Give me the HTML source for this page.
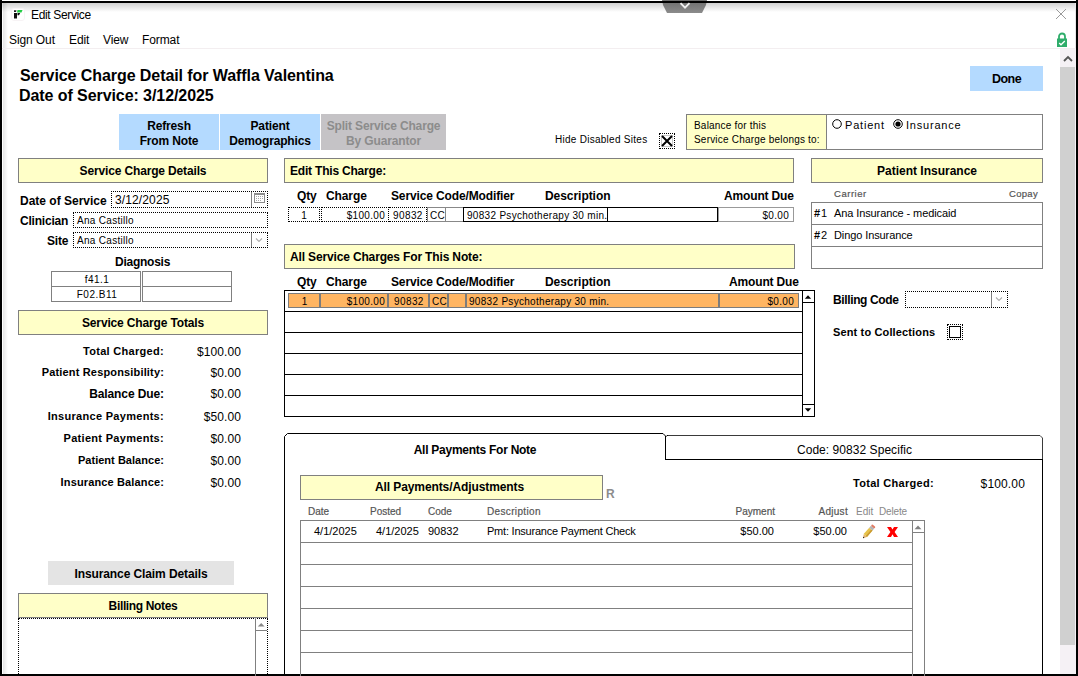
<!DOCTYPE html>
<html><head><meta charset="utf-8">
<style>
*{margin:0;padding:0;box-sizing:border-box}
html,body{width:1078px;height:676px;overflow:hidden;background:#fff;font-family:"Liberation Sans",sans-serif;color:#000}
.a{position:absolute}
.t{position:absolute;white-space:nowrap;line-height:1}
.b{font-weight:bold}
.yel{position:absolute;background:#ffffc8;border:1px solid #808080}
.dot{position:absolute;border:1px dotted #000}
.ctr{text-align:center}
.r{text-align:right}
.hl{position:absolute;height:1px}
.vl{position:absolute;width:1px}
</style></head><body>
<!-- window frame -->
<div class="a" style="left:2px;top:3px;width:1074px;height:9px;background:linear-gradient(rgba(0,0,0,0.18),rgba(0,0,0,0))"></div>
<div class="a" style="left:3px;top:3px;width:5px;height:671px;background:linear-gradient(90deg,rgba(0,0,0,0.1),rgba(0,0,0,0))"></div>
<div class="vl" style="left:1075px;top:3px;height:671px;background:#e8e6e8"></div>
<div class="a" style="left:0;top:1px;width:1078px;height:2px;background:#000"></div>
<div class="a" style="left:0;top:0;width:2px;height:676px;background:#000"></div>
<div class="a" style="left:1076px;top:0;width:2px;height:676px;background:#000"></div>
<div class="a" style="left:0;top:674px;width:1078px;height:2px;background:#000"></div>

<!-- top tab chevron -->
<svg class="a" style="left:660px;top:0" width="50" height="14" viewBox="0 0 50 14">
<defs><linearGradient id="tg" x1="0" y1="0" x2="0" y2="1"><stop offset="0" stop-color="#6c6c6c"/><stop offset="1" stop-color="#8c8c8c"/></linearGradient></defs>
<path d="M2 0 H47 L46 5 L42 13 H7 L3 5 Z" fill="url(#tg)"/>
<rect x="0" y="1" width="50" height="2" fill="#000"/>
<path d="M20.5 3.2 L25 7.7 L29.5 3.2" stroke="#f0f0f0" stroke-width="1.9" fill="none"/>
</svg>

<!-- title -->
<svg class="a" style="left:11px;top:8px" width="14" height="13" viewBox="0 0 14 13">
<rect x="0.5" y="0.5" width="13" height="12" rx="2.5" fill="#fff" stroke="#f7f3f5" stroke-width="1"/>
<rect x="3" y="5" width="3" height="5.5" fill="#111"/>
<path d="M3 2.2 H5.5 L5 4 H3Z" fill="#222"/>
<path d="M6.5 2 H11.5 L10.5 4.5 H6 Z" fill="#22cc44"/>
<path d="M6.5 5 H9.2 L8 7.2 H6.5Z" fill="#111"/>
</svg>
<div class="t" style="left:31px;top:9px;font-size:12px;letter-spacing:-0.35px">Edit Service</div>
<svg class="a" style="left:1055px;top:8px" width="12" height="12" viewBox="0 0 12 12"><path d="M1 1L11 11M11 1L1 11" stroke="#9a9a9a" stroke-width="1"/></svg>

<!-- menu -->
<div class="t" style="left:9px;top:34px;font-size:12px;letter-spacing:-0.1px">Sign Out</div>
<div class="t" style="left:69px;top:34px;font-size:12px;letter-spacing:-0.1px">Edit</div>
<div class="t" style="left:103px;top:34px;font-size:12px;letter-spacing:-0.1px">View</div>
<div class="t" style="left:142px;top:34px;font-size:12px;letter-spacing:-0.1px">Format</div>
<div class="a" style="left:2px;top:48px;width:1074px;height:1px;background:#f3eef0"></div>
<!-- lock -->
<svg class="a" style="left:1056px;top:32px" width="12" height="16" viewBox="0 0 12 16">
<path d="M3 7V4.5a3 3 0 0 1 6 0V7" stroke="#2fad6b" stroke-width="1.8" fill="none"/>
<rect x="1" y="6.5" width="10" height="8.5" fill="#2fad6b"/>
<path d="M3.2 11 L5 12.8 L8.8 9" stroke="#fff" stroke-width="1.3" fill="none"/>
</svg>

<!-- right window scrollbar -->
<div class="a" style="left:1060px;top:49px;width:16px;height:625px;background:#f5f1f5"></div>
<div class="a" style="left:1060px;top:67px;width:15px;height:578px;background:#d0d0d0"></div>
<svg class="a" style="left:1062px;top:54px" width="12" height="10" viewBox="0 0 12 10"><path d="M2 7 L6 3 L10 7" stroke="#555" stroke-width="1.8" fill="none"/></svg>

<!-- heading -->
<div class="t b" style="left:20px;top:68px;font-size:16px;letter-spacing:-0.075px">Service Charge Detail for Waffla Valentina</div>
<div class="t b" style="left:19px;top:88px;font-size:16px;letter-spacing:-0.075px">Date of Service: 3/12/2025</div>

<!-- buttons -->
<div class="a b ctr" style="left:119px;top:114px;width:100px;height:36px;background:#b4daff;font-size:12px;line-height:15px;padding-top:5px;letter-spacing:-0.15px">Refresh<br>From Note</div>
<div class="a b ctr" style="left:220px;top:114px;width:100px;height:36px;background:#b4daff;font-size:12px;line-height:15px;padding-top:5px;letter-spacing:-0.15px">Patient<br>Demographics</div>
<div class="a b ctr" style="left:321px;top:114px;width:125px;height:36px;background:#c5c3c6;color:#8c8c8c;font-size:12px;line-height:15px;padding-top:5px;letter-spacing:-0.15px">Split Service Charge<br>By Guarantor</div>

<div class="t" style="left:555px;top:135px;font-size:10px;letter-spacing:0.27px">Hide Disabled Sites</div>
<div class="dot" style="left:659px;top:133px;width:16px;height:16px"></div>
<svg class="a" style="left:660px;top:134px" width="14" height="14" viewBox="0 0 14 14"><rect x="1.5" y="1.5" width="11" height="11" fill="none" stroke="#c8c8c8"/><path d="M2 2L12 12M12 2L2 12" stroke="#000" stroke-width="2"/></svg>

<!-- balance box -->
<div class="a" style="left:686px;top:114px;width:357px;height:36px;border:1px solid #808080;background:#fff"></div>
<div class="a" style="left:687px;top:115px;width:140px;height:34px;background:#ffffc8;border-right:1px solid #808080"></div>
<div class="t" style="left:694px;top:121px;font-size:10px;letter-spacing:0.2px">Balance for this</div>
<div class="t" style="left:694px;top:135px;font-size:10px;letter-spacing:0.2px">Service Charge belongs to:</div>
<svg class="a" style="left:832px;top:119px" width="10" height="10" viewBox="0 0 10 10"><circle cx="5" cy="5" r="4.3" fill="#fff" stroke="#000" stroke-width="1"/></svg>
<div class="t" style="left:845px;top:120px;font-size:11px;letter-spacing:0.8px">Patient</div>
<svg class="a" style="left:893px;top:119px" width="10" height="10" viewBox="0 0 10 10"><circle cx="5" cy="5" r="4.3" fill="#fff" stroke="#000" stroke-width="1"/><circle cx="5" cy="5" r="2.6" fill="#000"/></svg>
<div class="t" style="left:906px;top:120px;font-size:11px;letter-spacing:0.79px">Insurance</div>

<!-- Done -->
<div class="a b ctr" style="left:970px;top:66px;width:73px;height:25px;background:#b4daff;font-size:12.5px;line-height:25px;padding-top:1px;letter-spacing:-0.5px">Done</div>

<!-- LEFT PANEL -->
<div class="yel b ctr" style="left:18px;top:158px;width:250px;height:25px;font-size:12px;line-height:23px;padding-top:1px;letter-spacing:-0.15px">Service Charge Details</div>
<div class="t b" style="left:20px;top:195px;font-size:12px">Date of Service</div>
<div class="dot" style="left:111px;top:191px;width:157px;height:17px"></div>
<div class="t" style="left:115px;top:194px;font-size:12px;letter-spacing:0.12px">3/12/2025</div>
<div class="vl" style="left:251px;top:192px;height:15px;background:#808080"></div>
<svg class="a" style="left:253px;top:192px" width="13" height="12" viewBox="0 0 13 12"><rect x="1.5" y="1.5" width="10" height="9" fill="#fff" stroke="#8c8c8c"/><rect x="1" y="1" width="11" height="2" fill="#8c8c8c"/><path d="M3 4.5h1M5 4.5h1M7 4.5h1M9 4.5h1M3 6.5h1M5 6.5h1M7 6.5h1M9 6.5h1M3 8.5h1M5 8.5h1M7 8.5h1" stroke="#a8a8a8"/></svg>
<div class="t b" style="left:20px;top:215px;font-size:12px;letter-spacing:-0.2px">Clinician</div>
<div class="dot" style="left:73px;top:212px;width:195px;height:16px"></div>
<div class="t" style="left:77px;top:216px;font-size:10px;letter-spacing:0.3px">Ana Castillo</div>
<div class="t b" style="left:47px;top:235px;font-size:12px;letter-spacing:-0.2px">Site</div>
<div class="dot" style="left:73px;top:232px;width:195px;height:16px"></div>
<div class="t" style="left:77px;top:236px;font-size:10px;letter-spacing:0.3px">Ana Castillo</div>
<div class="vl" style="left:251px;top:233px;height:14px;background:#808080"></div>
<svg class="a" style="left:254px;top:236px" width="10" height="8" viewBox="0 0 10 8"><path d="M2 2.5L5 5.5L8 2.5" stroke="#b0b0b0" stroke-width="1.2" fill="none"/></svg>

<div class="t b" style="left:115px;top:256px;font-size:12px;letter-spacing:-0.25px">Diagnosis</div>
<div class="a" style="left:51px;top:271px;width:90px;height:16px;border:1px solid #808080"></div>
<div class="a" style="left:142px;top:271px;width:90px;height:16px;border:1px solid #808080"></div>
<div class="a" style="left:51px;top:286px;width:90px;height:16px;border:1px solid #808080"></div>
<div class="a" style="left:142px;top:286px;width:90px;height:16px;border:1px solid #808080"></div>
<div class="t ctr" style="left:52px;top:275px;width:90px;font-size:10px;letter-spacing:0.5px">f41.1</div>
<div class="t ctr" style="left:52px;top:290px;width:90px;font-size:10px;letter-spacing:0.5px">F02.B11</div>

<div class="yel b ctr" style="left:18px;top:310px;width:250px;height:25px;font-size:12px;line-height:23px;padding-top:1px;letter-spacing:-0.15px">Service Charge Totals</div>
<div class="t b r" style="left:0;top:346px;width:164px;font-size:11px;letter-spacing:0.3px">Total Charged:</div>
<div class="t r" style="left:150px;top:346px;width:91px;font-size:12px;letter-spacing:0.1px">$100.00</div>
<div class="t b r" style="left:0;top:367px;width:164px;font-size:11px;letter-spacing:0.16px">Patient Responsibility:</div>
<div class="t r" style="left:150px;top:367px;width:91px;font-size:12px;letter-spacing:0.1px">$0.00</div>
<div class="t b r" style="left:0;top:388px;width:164px;font-size:12px;letter-spacing:-0.1px">Balance Due:</div>
<div class="t r" style="left:150px;top:388px;width:91px;font-size:12px;letter-spacing:0.1px">$0.00</div>
<div class="t b r" style="left:0;top:411px;width:164px;font-size:11px;letter-spacing:0.3px">Insurance Payments:</div>
<div class="t r" style="left:150px;top:411px;width:91px;font-size:12px;letter-spacing:0.1px">$50.00</div>
<div class="t b r" style="left:0;top:433px;width:164px;font-size:11px;letter-spacing:0.3px">Patient Payments:</div>
<div class="t r" style="left:150px;top:433px;width:91px;font-size:12px;letter-spacing:0.1px">$0.00</div>
<div class="t b r" style="left:0;top:455px;width:164px;font-size:11px;letter-spacing:0.03px">Patient Balance:</div>
<div class="t r" style="left:150px;top:455px;width:91px;font-size:12px;letter-spacing:0.1px">$0.00</div>
<div class="t b r" style="left:0;top:477px;width:164px;font-size:11px;letter-spacing:0.14px">Insurance Balance:</div>
<div class="t r" style="left:150px;top:477px;width:91px;font-size:12px;letter-spacing:0.1px">$0.00</div>

<div class="a b ctr" style="left:48px;top:561px;width:186px;height:24px;background:#e4e4e4;font-size:12px;line-height:24px;padding-top:1px;letter-spacing:-0.1px">Insurance Claim Details</div>
<div class="yel b ctr" style="left:18px;top:593px;width:250px;height:25px;font-size:12px;line-height:23px;padding-top:1px;letter-spacing:-0.35px">Billing Notes</div>
<div class="dot" style="left:18px;top:618px;width:250px;height:60px"></div>
<div class="vl" style="left:255px;top:618px;height:58px;background:#808080"></div>
<div class="hl" style="left:256px;top:630px;width:11px;background:#808080"></div>
<svg class="a" style="left:256px;top:621px" width="11" height="7" viewBox="0 0 11 7"><path d="M1.8 5.5L5.2 2L8.6 5.5Z" fill="#888"/></svg>

<!-- MIDDLE PANEL -->
<div class="yel b" style="left:284px;top:158px;width:510px;height:25px;font-size:12px;line-height:23px;padding-left:5px;padding-top:1px;letter-spacing:-0.2px">Edit This Charge:</div>
<div class="t b" style="left:297px;top:190px;font-size:12px;letter-spacing:-0.2px">Qty</div>
<div class="t b" style="left:326px;top:190px;font-size:12px;letter-spacing:-0.1px">Charge</div>
<div class="t b" style="left:391px;top:190px;font-size:12px;letter-spacing:-0.13px">Service Code/Modifier</div>
<div class="t b" style="left:545px;top:190px;font-size:12px;letter-spacing:-0.05px">Description</div>
<div class="t b" style="left:724px;top:190px;font-size:12px;letter-spacing:-0.15px">Amount Due</div>

<div class="dot" style="left:288px;top:207px;width:32px;height:15px"></div>
<div class="dot" style="left:321px;top:207px;width:68px;height:15px"></div>
<div class="a" style="left:389px;top:207px;width:38px;height:15px;border:1px dotted #000;border-left:none"></div>
<div class="a" style="left:427px;top:207px;width:19px;height:15px;border:1px solid #888"></div>
<div class="a" style="left:445px;top:207px;width:19px;height:15px;border:1px solid #888"></div>
<div class="a" style="left:463px;top:207px;width:255px;height:15px;border:1px solid #000"></div>
<div class="vl" style="left:607px;top:208px;height:13px;background:#000"></div>
<div class="a" style="left:718px;top:207px;width:76px;height:15px;border:1px solid #999"></div>
<div class="t ctr" style="left:288px;top:211px;width:32px;font-size:10px">1</div>
<div class="t r" style="left:321px;top:211px;width:64px;font-size:10px;letter-spacing:0.3px">$100.00</div>
<div class="t" style="left:393px;top:211px;font-size:10px;letter-spacing:0.4px">90832</div>
<div class="t" style="left:430px;top:211px;font-size:10px;letter-spacing:0.2px">CC</div>
<div class="t" style="left:467px;top:211px;font-size:10px;letter-spacing:0.3px">90832 Psychotherapy 30 min.</div>
<div class="t r" style="left:718px;top:211px;width:71px;font-size:10px;letter-spacing:0.3px">$0.00</div>

<div class="yel b" style="left:284px;top:244px;width:511px;height:25px;font-size:12px;line-height:23px;padding-left:5px;padding-top:1px;letter-spacing:-0.15px">All Service Charges For This Note:</div>
<div class="t b" style="left:297px;top:276px;font-size:12px;letter-spacing:-0.2px">Qty</div>
<div class="t b" style="left:326px;top:276px;font-size:12px;letter-spacing:-0.1px">Charge</div>
<div class="t b" style="left:391px;top:276px;font-size:12px;letter-spacing:-0.13px">Service Code/Modifier</div>
<div class="t b" style="left:545px;top:276px;font-size:12px;letter-spacing:-0.05px">Description</div>
<div class="t b" style="left:729px;top:276px;font-size:12px;letter-spacing:-0.15px">Amount Due</div>

<div class="a" style="left:284px;top:290px;width:531px;height:127px;border:1px solid #000"></div>
<div class="hl" style="left:285px;top:311px;width:518px;background:#000"></div>
<div class="hl" style="left:285px;top:332px;width:518px;background:#000"></div>
<div class="hl" style="left:285px;top:353px;width:518px;background:#000"></div>
<div class="hl" style="left:285px;top:374px;width:518px;background:#000"></div>
<div class="hl" style="left:285px;top:395px;width:518px;background:#000"></div>
<div class="vl" style="left:802px;top:291px;height:125px;background:#000"></div>
<div class="hl" style="left:803px;top:302px;width:11px;background:#000"></div>
<div class="hl" style="left:803px;top:404px;width:11px;background:#000"></div>
<svg class="a" style="left:803px;top:292px" width="11" height="9" viewBox="0 0 11 9"><path d="M1.8 6.8L5 3.2L8.2 6.8Z" fill="#000"/></svg>
<svg class="a" style="left:803px;top:406px" width="11" height="9" viewBox="0 0 11 9"><path d="M1.8 2.2L5 5.8L8.2 2.2Z" fill="#000"/></svg>
<!-- orange row -->
<div class="a" style="left:288px;top:293px;width:32px;height:15px;border:1px solid #7c7c7c;background:#ffb562"></div>
<div class="a" style="left:320px;top:293px;width:68px;height:15px;border:1px solid #7c7c7c;background:#ffb562"></div>
<div class="a" style="left:388px;top:293px;width:41px;height:15px;border:1px solid #7c7c7c;background:#ffb562"></div>
<div class="a" style="left:429px;top:293px;width:19px;height:15px;border:1px solid #7c7c7c;background:#ffb562"></div>
<div class="a" style="left:448px;top:293px;width:18px;height:15px;border:1px solid #7c7c7c;background:#ffb562"></div>
<div class="a" style="left:466px;top:293px;width:253px;height:15px;border:1px solid #7c7c7c;background:#ffb562"></div>
<div class="a" style="left:719px;top:293px;width:80px;height:15px;border:1px solid #7c7c7c;background:#ffb562"></div>
<div class="t ctr" style="left:288px;top:297px;width:33px;font-size:10px">1</div>
<div class="t r" style="left:320px;top:297px;width:65px;font-size:10px;letter-spacing:0.3px">$100.00</div>
<div class="t" style="left:394px;top:297px;font-size:10px;letter-spacing:0.4px">90832</div>
<div class="t" style="left:432px;top:297px;font-size:10px;letter-spacing:0.2px">CC</div>
<div class="t" style="left:469px;top:297px;font-size:10px;letter-spacing:0.3px">90832 Psychotherapy 30 min.</div>
<div class="t r" style="left:719px;top:297px;width:75px;font-size:10px;letter-spacing:0.3px">$0.00</div>

<!-- RIGHT PANEL -->
<div class="yel b ctr" style="left:811px;top:158px;width:232px;height:25px;font-size:12px;line-height:23px;padding-top:1px">Patient Insurance</div>
<div class="t" style="left:834px;top:189px;font-size:9.5px;color:#555;-webkit-text-stroke:0.2px #555;letter-spacing:0.53px">Carrier</div>
<div class="t r" style="left:980px;top:189px;width:58px;font-size:9.5px;color:#555;-webkit-text-stroke:0.2px #555;letter-spacing:0.3px">Copay</div>
<div class="a" style="left:811px;top:202px;width:232px;height:67px;border:1px solid #808080"></div>
<div class="hl" style="left:812px;top:224px;width:230px;background:#808080"></div>
<div class="hl" style="left:812px;top:246px;width:230px;background:#808080"></div>
<div class="t b" style="left:814px;top:208px;font-size:11px">#</div>
<div class="t" style="left:821px;top:208px;font-size:11px">1</div>
<div class="t" style="left:834px;top:208px;font-size:11px;letter-spacing:-0.1px">Ana Insurance - medicaid</div>
<div class="t b" style="left:814px;top:230px;font-size:11px">#</div>
<div class="t" style="left:821px;top:230px;font-size:11px">2</div>
<div class="t" style="left:834px;top:230px;font-size:11px;letter-spacing:-0.1px">Dingo Insurance</div>

<div class="t b" style="left:833px;top:294px;font-size:12px;letter-spacing:-0.37px">Billing Code</div>
<div class="dot" style="left:905px;top:291px;width:103px;height:17px"></div>
<div class="vl" style="left:991px;top:292px;height:15px;background:#808080"></div>
<svg class="a" style="left:994px;top:295px" width="10" height="8" viewBox="0 0 10 8"><path d="M2 2.5L5 5.5L8 2.5" stroke="#b0b0b0" stroke-width="1.2" fill="none"/></svg>
<div class="t b" style="left:833px;top:327px;font-size:11px;letter-spacing:0.14px">Sent to Collections</div>
<div class="dot" style="left:947px;top:324px;width:16px;height:16px"></div>
<div class="a" style="left:949px;top:326px;width:12px;height:12px;border:1px solid #000"></div>

<!-- TAB PANEL -->
<div class="vl" style="left:284px;top:437px;height:237px;background:#000"></div>
<div class="hl" style="left:288px;top:433px;width:375px;background:#000"></div>
<svg class="a" style="left:284px;top:433px" width="4" height="4" viewBox="0 0 4 4"><path d="M0.5 4 L0.5 3.5 L3.5 0.5 L4 0.5" stroke="#000" stroke-width="1" fill="none"/></svg>
<svg class="a" style="left:662px;top:433px" width="8" height="5" viewBox="0 0 8 5"><path d="M0 0.5 L1 0.5 L3.5 3 L3.5 5 M3.5 4 L5 2.5 L8 2.5" stroke="#000" stroke-width="1" fill="none"/></svg>
<div class="vl" style="left:665px;top:437px;height:22px;background:#000"></div>
<div class="hl" style="left:668px;top:435px;width:372px;background:#3a3a3a"></div>
<svg class="a" style="left:1039px;top:435px" width="4" height="4" viewBox="0 0 4 4"><path d="M0 0.5 L1 0.5 L3.5 3 L3.5 4" stroke="#3a3a3a" stroke-width="1" fill="none"/></svg>
<div class="vl" style="left:1042px;top:438px;height:21px;background:#3a3a3a"></div>
<div class="vl" style="left:1042px;top:459px;height:215px;background:#000"></div>
<div class="hl" style="left:665px;top:459px;width:378px;background:#000"></div>
<div class="t b ctr" style="left:285px;top:444px;width:380px;font-size:12px;letter-spacing:-0.26px">All Payments For Note</div>
<div class="t ctr" style="left:666px;top:444px;width:377px;font-size:12px;letter-spacing:0.05px">Code: 90832 Specific</div>

<div class="yel b ctr" style="left:300px;top:475px;width:303px;height:25px;font-size:12px;line-height:22px;padding-right:4px;letter-spacing:-0.1px">All Payments/Adjustments</div>
<div class="t b" style="left:606px;top:488px;font-size:12px;color:#8c8c8c">R</div>
<div class="t b" style="left:853px;top:478px;font-size:11px;letter-spacing:0.3px">Total Charged:</div>
<div class="t r" style="left:950px;top:478px;width:75px;font-size:12px;letter-spacing:0.15px">$100.00</div>

<div class="t" style="left:308px;top:507px;font-size:10px;color:#555;-webkit-text-stroke:0.2px #555">Date</div>
<div class="t" style="left:370px;top:507px;font-size:10px;color:#555;-webkit-text-stroke:0.2px #555">Posted</div>
<div class="t" style="left:428px;top:507px;font-size:10px;color:#555;-webkit-text-stroke:0.2px #555">Code</div>
<div class="t" style="left:487px;top:507px;font-size:10px;color:#555;-webkit-text-stroke:0.2px #555;letter-spacing:0.35px">Description</div>
<div class="t r" style="left:700px;top:507px;width:75px;font-size:10px;color:#555;-webkit-text-stroke:0.2px #555">Payment</div>
<div class="t r" style="left:780px;top:507px;width:68px;font-size:10px;color:#555;-webkit-text-stroke:0.2px #555;letter-spacing:0.3px">Adjust</div>
<div class="t" style="left:856px;top:507px;font-size:10px;color:#888">Edit</div>
<div class="t" style="left:879px;top:507px;font-size:10px;color:#888;letter-spacing:-0.15px">Delete</div>

<div class="a" style="left:300px;top:520px;width:625px;height:160px;border:1px solid #808080"></div>
<div class="hl" style="left:301px;top:542px;width:611px;background:#808080"></div>
<div class="hl" style="left:301px;top:564px;width:611px;background:#808080"></div>
<div class="hl" style="left:301px;top:586px;width:611px;background:#808080"></div>
<div class="hl" style="left:301px;top:608px;width:611px;background:#808080"></div>
<div class="hl" style="left:301px;top:630px;width:611px;background:#808080"></div>
<div class="hl" style="left:301px;top:652px;width:611px;background:#808080"></div>
<div class="vl" style="left:912px;top:521px;height:155px;background:#808080"></div>
<div class="hl" style="left:913px;top:532px;width:11px;background:#808080"></div>
<svg class="a" style="left:913px;top:523px" width="11" height="9" viewBox="0 0 11 9"><path d="M1.5 6.2L5 2.6L8.5 6.2Z" fill="#808080"/></svg>

<div class="t" style="left:314px;top:526px;font-size:11px">4/1/2025</div>
<div class="t" style="left:376px;top:526px;font-size:11px">4/1/2025</div>
<div class="t" style="left:428px;top:526px;font-size:11px">90832</div>
<div class="t" style="left:487px;top:526px;font-size:11px;letter-spacing:-0.22px">Pmt: Insurance Payment Check</div>
<div class="t r" style="left:700px;top:526px;width:74px;font-size:11px">$50.00</div>
<div class="t r" style="left:780px;top:526px;width:67px;font-size:11px">$50.00</div>
<svg class="a" style="left:858px;top:521px" width="20" height="20" viewBox="0 0 20 20">
<g transform="translate(5 17.2) rotate(-49)">
<path d="M0 0 L3.5 -2.1 L3.5 2.1 Z" fill="#e0b070"/>
<path d="M0 0 L1.3 -0.8 L1.3 0.8 Z" fill="#111"/>
<rect x="3.5" y="-2.2" width="8.5" height="4.4" fill="#e6c24a"/>
<rect x="3.5" y="0.6" width="8.5" height="1.6" fill="#c99a32"/>
<rect x="12" y="-2.2" width="2.6" height="4.4" fill="#b4b4b4"/>
<rect x="14.6" y="-2.2" width="2" height="4.4" rx="0.8" fill="#e07a62"/>
</g></svg>
<svg class="a" style="left:886px;top:526px" width="13" height="12" viewBox="0 0 13 12"><path d="M1 1 H5 L6.5 3.6 L8 1 H12 L8.6 5.9 L12 11 H8 L6.5 8.3 L5 11 H1 L4.4 5.9 Z" fill="#ff0000"/></svg>

</body></html>
